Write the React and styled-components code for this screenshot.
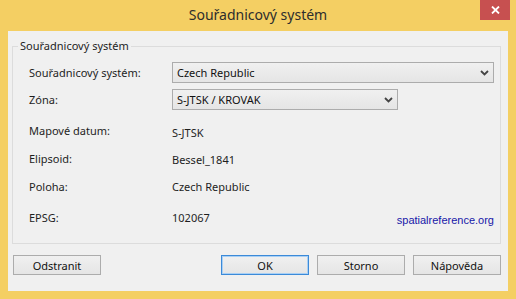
import React from "react";
import styled, { createGlobalStyle } from "styled-components";

const GlobalStyle = createGlobalStyle`
  html, body { margin: 0; padding: 0; overflow: hidden; }
  body { font-family: "Noto Sans", "Open Sans", sans-serif; }
`;

const FONT = `"Noto Sans", "Open Sans", sans-serif`;

const Window = styled.div`
  width: 516px;
  height: 299px;
  background: #f4cf63;
  display: flex;
  flex-direction: column;
  box-sizing: border-box;
  font-family: ${FONT};
`;

const TitleBar = styled.div`
  height: 31px;
  display: grid;
  grid-template-columns: 1fr auto 1fr;
  align-items: start;
  flex-shrink: 0;
`;

const Title = styled.div`
  grid-column: 2;
  font-size: 14px;
  line-height: 30px;
  color: #2d2d2d;
  white-space: nowrap;
`;

const CloseButton = styled.div`
  grid-column: 3;
  justify-self: end;
  margin-right: 6px;
  width: 30px;
  height: 20px;
  background: #c75050;
  display: flex;
  align-items: center;
  justify-content: center;
`;

const Client = styled.div`
  flex: 1;
  margin: 0 8px 8px 8px;
  background: #f0f0f0;
  padding: 7px 7px 16px 4px;
  display: flex;
  flex-direction: column;
  box-sizing: border-box;
`;

const GroupBox = styled.fieldset`
  margin: 0;
  padding: 0 6px 12px 16px;
  border: 1px solid #dcdcdc;
  min-width: 0;
`;

const Legend = styled.legend`
  margin-left: -11px;
  padding: 0 2px;
  font-size: 11px;
  line-height: 16px;
  color: #1e1e1e;
`;

const Row = styled.div`
  display: flex;
  align-items: center;
  height: ${(p) => p.$h}px;
  margin-top: ${(p) => p.$mt}px;
`;

const Label = styled.div`
  width: 143px;
  flex-shrink: 0;
  font-size: 11px;
  color: #1e1e1e;
  white-space: nowrap;
`;

const Value = styled.div`
  flex: 1;
  font-size: 11px;
  color: #1e1e1e;
  padding-top: ${(p) => p.$drop || 0}px;
  white-space: nowrap;
`;

const Combo = styled.div`
  width: ${(p) => p.$w}px;
  height: 21px;
  box-sizing: border-box;
  border: 1px solid #acacac;
  background: linear-gradient(#f0f0f0, #e5e5e5);
  display: flex;
  align-items: center;
  justify-content: space-between;
  padding: 0 4px 0 4px;
  font-size: 11px;
  color: #111;
`;

const Link = styled.a`
  font-family: "Liberation Sans", Arial, sans-serif;
  font-size: 11px;
  color: #1717a8;
  text-decoration: none;
  padding-top: 6px;
`;

const ButtonBar = styled.div`
  display: flex;
  align-items: center;
  margin-top: 11px;
  padding-left: 1px;
  gap: 8px;
`;

const Spacer = styled.div`
  flex: 1;
`;

const Button = styled.div`
  width: 88px;
  height: 20px;
  box-sizing: border-box;
  border: 1px solid ${(p) => (p.$default ? "#3c8ad8" : "#acacac")};
  box-shadow: ${(p) => (p.$default ? "inset 0 0 0 1px #a9d0f5" : "none")};
  background: linear-gradient(#f0f0f0, #e5e5e5);
  display: flex;
  align-items: center;
  justify-content: center;
  font-size: 11px;
  color: #111;
`;

const Chevron = () => (
  <svg width="9" height="6" viewBox="0 0 9 6">
    <path d="M1 1 L4.5 4.5 L8 1" fill="none" stroke="#444" strokeWidth="1.8" />
  </svg>
);

export default function App() {
  return (
    <>
      <GlobalStyle />
      <Window>
        <TitleBar>
          <Title>Souřadnicový systém</Title>
          <CloseButton>
            <svg width="9" height="8" viewBox="0 0 9 8">
              <path d="M1 0.5 L8 7.5 M8 0.5 L1 7.5" stroke="#fff" strokeWidth="1.8" />
            </svg>
          </CloseButton>
        </TitleBar>
        <Client>
          <GroupBox>
            <Legend>Souřadnicový systém</Legend>
            <Row $h={21} $mt={8}>
              <Label>Souřadnicový systém:</Label>
              <Combo $w={322}>
                <span>Czech Republic</span>
                <Chevron />
              </Combo>
            </Row>
            <Row $h={21} $mt={6}>
              <Label>Zóna:</Label>
              <Combo $w={226}>
                <span>S-JTSK / KROVAK</span>
                <Chevron />
              </Combo>
            </Row>
            <Row $h={28} $mt={6}>
              <Label>Mapové datum:</Label>
              <Value $drop={5}>S-JTSK</Value>
            </Row>
            <Row $h={28} $mt={0}>
              <Label>Elipsoid:</Label>
              <Value $drop={3}>Bessel_1841</Value>
            </Row>
            <Row $h={28} $mt={0}>
              <Label>Poloha:</Label>
              <Value>Czech Republic</Value>
            </Row>
            <Row $h={28} $mt={3}>
              <Label>EPSG:</Label>
              <Value>102067</Value>
              <Link href="#">spatialreference.org</Link>
            </Row>
          </GroupBox>
          <ButtonBar>
            <Button>Odstranit</Button>
            <Spacer />
            <Button $default>OK</Button>
            <Button>Storno</Button>
            <Button>Nápověda</Button>
          </ButtonBar>
        </Client>
      </Window>
    </>
  );
}
